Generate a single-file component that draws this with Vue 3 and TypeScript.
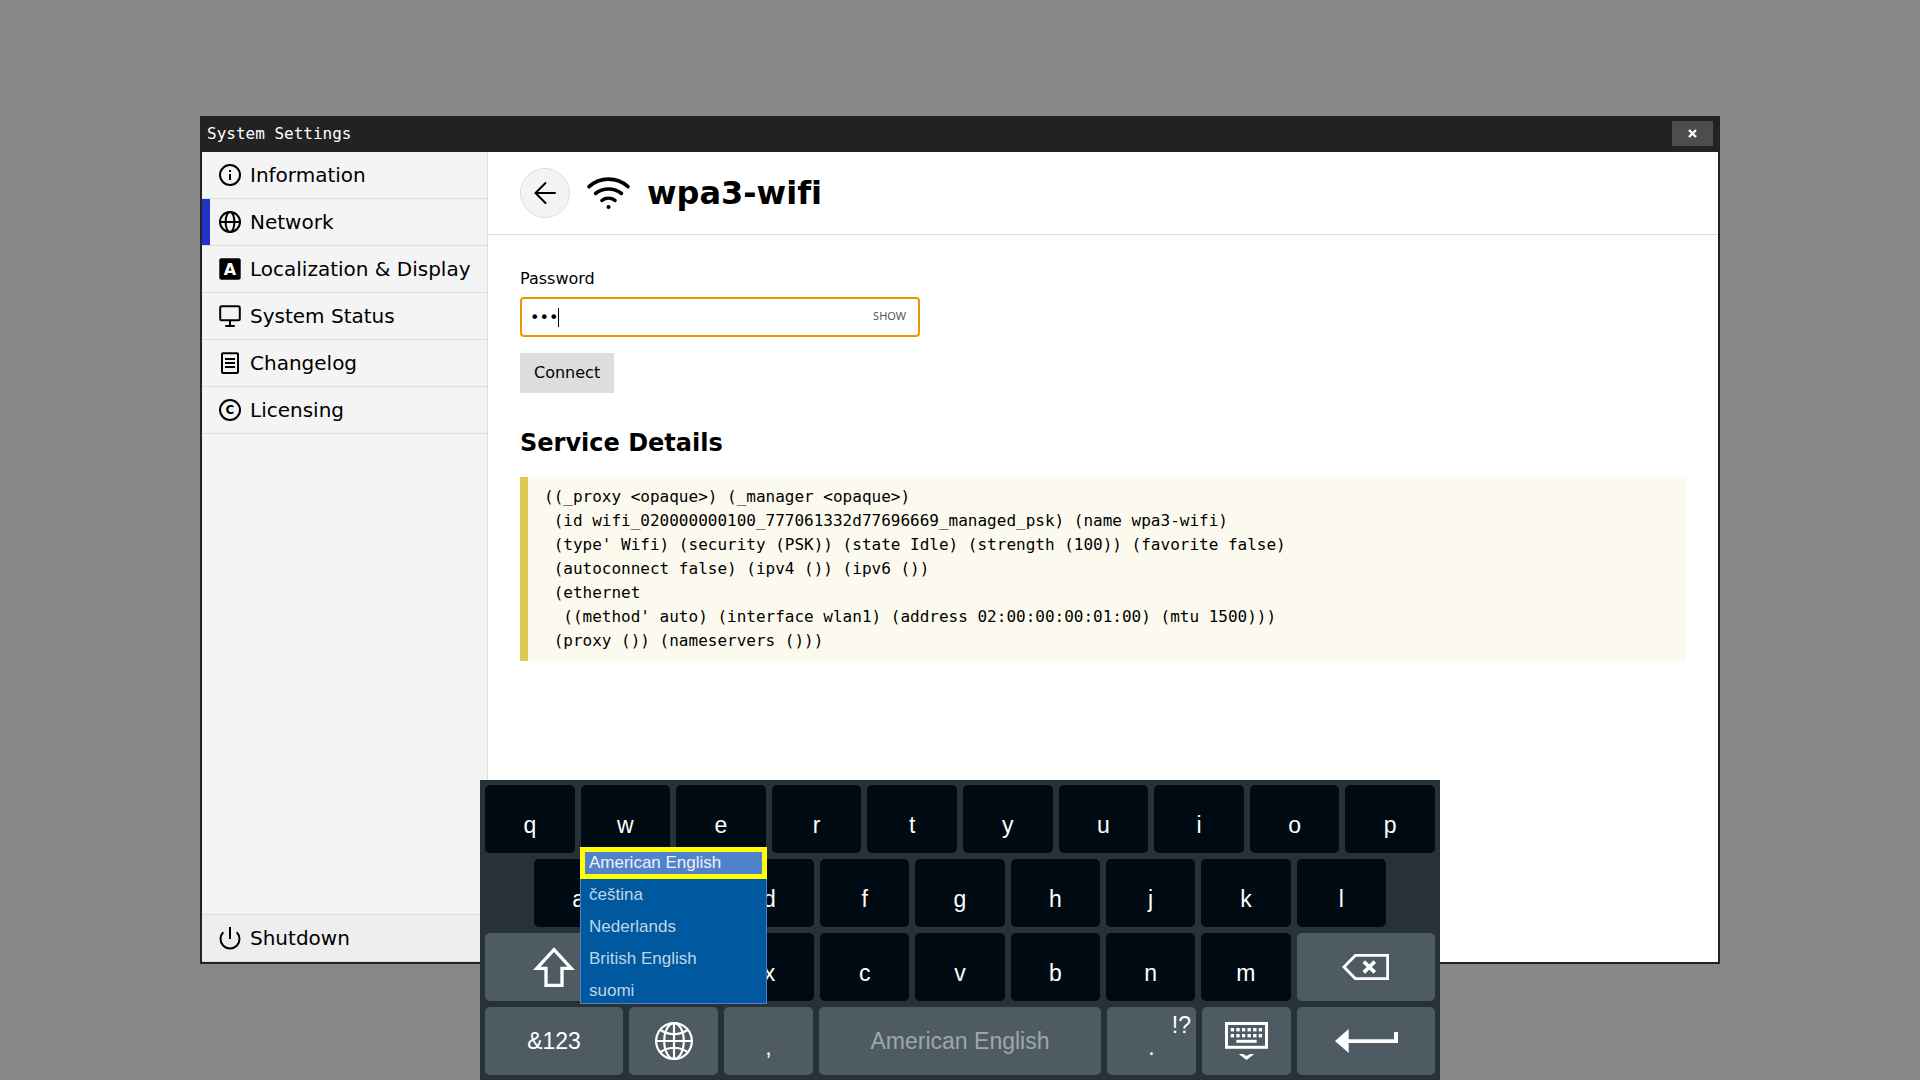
<script setup lang="ts">
import { ref } from 'vue'

interface NavItem {
  id: string
  label: string
}

interface Key {
  label: string
  kind: 'letter' | 'side' | 'small' | 'space'
  icon?: string
  low?: boolean
  hint?: string
}

const navItems: NavItem[] = [
  { id: 'information', label: 'Information' },
  { id: 'network', label: 'Network' },
  { id: 'localization', label: 'Localization & Display' },
  { id: 'status', label: 'System Status' },
  { id: 'changelog', label: 'Changelog' },
  { id: 'licensing', label: 'Licensing' },
]
const current = ref('network')

const password = ref('abc')
const revealed = ref(false)

const details = `((_proxy <opaque>) (_manager <opaque>)
 (id wifi_020000000100_777061332d77696669_managed_psk) (name wpa3-wifi)
 (type' Wifi) (security (PSK)) (state Idle) (strength (100)) (favorite false)
 (autoconnect false) (ipv4 ()) (ipv6 ())
 (ethernet
  ((method' auto) (interface wlan1) (address 02:00:00:00:01:00) (mtu 1500)))
 (proxy ()) (nameservers ()))`

const letters = (row: string): Key[] => row.split('').map((label) => ({ label, kind: 'letter', low: true }))

const rows: Key[][] = [
  letters('qwertyuiop'),
  letters('asdfghjkl'),
  [
    { label: 'Shift', kind: 'side', icon: 'shift' },
    ...letters('zxcvbnm'),
    { label: 'Backspace', kind: 'side', icon: 'backspace' },
  ],
  [
    { label: '&123', kind: 'side' },
    { label: 'Language', kind: 'small', icon: 'language' },
    { label: ',', kind: 'small', low: true },
    { label: 'American English', kind: 'space' },
    { label: '.', kind: 'small', low: true, hint: '!?' },
    { label: 'Hide keyboard', kind: 'small', icon: 'hide' },
    { label: 'Enter', kind: 'side', icon: 'enter' },
  ],
]

const languages = ['American English', 'čeština', 'Nederlands', 'British English', 'suomi']
const language = ref(languages[0])
</script>

<template>
  <div class="desktop">
    <div class="window">
      <header class="titlebar">
        <span>System Settings</span>
        <button class="close" type="button" aria-label="Close">
          <svg width="9" height="9" viewBox="0 0 9 9"><path d="M1 1l7 7M8 1l-7 7" stroke="#fff" stroke-width="2.3" /></svg>
        </button>
      </header>

      <div class="body">
        <nav class="sidebar">
          <a
            v-for="item in navItems"
            :key="item.id"
            href="#"
            class="nav-item"
            :class="{ active: item.id === current }"
            @click.prevent="current = item.id"
          >
            <svg class="nav-icon" viewBox="0 0 24 24">
              <template v-if="item.id === 'information'">
                <circle cx="12" cy="12" r="10" />
                <path d="M12 7v2M12 11v6" />
              </template>
              <template v-else-if="item.id === 'network'">
                <circle cx="12" cy="12" r="10" />
                <ellipse cx="12" cy="12" rx="4.4" ry="10" />
                <path d="M2 12h20" />
              </template>
              <template v-else-if="item.id === 'localization'">
                <rect class="solid" x="1.3" y="1.3" width="21.4" height="21.4" rx="2" />
                <text class="mark light" x="12" y="18" font-size="16">A</text>
              </template>
              <template v-else-if="item.id === 'status'">
                <rect x="2.2" y="2.2" width="19.6" height="14" rx="1.5" />
                <path d="M12 16v6M7.3 22h9.4" />
              </template>
              <template v-else-if="item.id === 'changelog'">
                <rect x="4" y="2.2" width="16" height="19.8" rx="1" />
                <path d="M7 8h10M7 12h10M7 16h10" />
              </template>
              <template v-else>
                <circle cx="12" cy="12" r="10" />
                <text class="mark" x="12" y="16.4" font-size="12">C</text>
              </template>
            </svg>
            <span>{{ item.label }}</span>
          </a>
          <button class="nav-item shutdown" type="button">
            <svg class="nav-icon" viewBox="0 0 24 24"><path d="M5.3 6.3a9.5 9.5 0 1 0 13.4 0M12 1v12" /></svg>
            <span>Shutdown</span>
          </button>
        </nav>

        <main class="content">
          <div class="page-header">
            <a class="back" href="#" aria-label="Back" @click.prevent>
              <svg width="24" height="24" viewBox="0 0 24 24"><path d="M22 12H2.5M12.5 2L2.5 12l10 10" fill="none" stroke="#000" stroke-width="2" stroke-linecap="round" /></svg>
            </a>
            <svg width="45" height="32" viewBox="0 0 45 32" fill="none" stroke="#000" stroke-width="3.6" stroke-linecap="round">
              <path d="M3 9.7A29 29 0 0 1 42 9.7M9.5 16.5A21 21 0 0 1 35.5 16.5M16 23.4A11 11 0 0 1 29 23.4" />
              <circle cx="22.5" cy="30" r="2" fill="#000" stroke="none" />
            </svg>
            <h1>wpa3-wifi</h1>
          </div>

          <div class="page">
            <form class="form" @submit.prevent>
              <label for="password">Password</label>
              <div class="field">
                <input id="password" v-model="password" :type="revealed ? 'text' : 'password'" autocomplete="off" />
                <span class="caret"></span>
                <button class="show" type="button" @click="revealed = !revealed">SHOW</button>
              </div>
              <button class="connect" type="submit">Connect</button>
            </form>
            <h2>Service Details</h2>
            <pre class="details">{{ details }}</pre>
          </div>
        </main>
      </div>
    </div>

    <div class="keyboard">
      <div v-for="(row, index) in rows" :key="index" class="key-row" :class="{ inset: index === 1 }">
        <button
          v-for="key in row"
          :key="key.label"
          type="button"
          class="key"
          :class="[key.kind, { low: key.low }]"
          :aria-label="key.icon ? key.label : undefined"
        >
          <svg v-if="key.icon === 'shift'" width="42" height="40" viewBox="0 0 42 40" fill="none" stroke="#fff" stroke-width="3.3">
            <path d="M21 2.6L38.2 21.4H29V38.3H13V21.4H3.8Z" />
          </svg>
          <svg v-else-if="key.icon === 'backspace'" width="47" height="26" viewBox="0 0 47 26" fill="none" stroke="#fff" stroke-width="2.8">
            <path d="M2 13L13.3 1.4H45.6V24.6H13.3Z" />
            <path d="M21.8 7.6l11 10.8M32.8 7.6l-11 10.8" stroke-width="3.6" />
          </svg>
          <svg v-else-if="key.icon === 'language'" width="38" height="38" viewBox="0 0 38 38" fill="none" stroke="#fff" stroke-width="2.2">
            <circle cx="19" cy="19" r="17.9" />
            <ellipse cx="19" cy="19" rx="9.8" ry="17.9" />
            <path d="M19 1v36M1 19h36M5.5 8Q19 16.5 32.5 8M5.5 30Q19 21.5 32.5 30" />
          </svg>
          <svg v-else-if="key.icon === 'hide'" width="43" height="38" viewBox="0 0 43 38" fill="#fff">
            <rect x="1.5" y="1.5" width="40" height="23.8" fill="none" stroke="#fff" stroke-width="3" />
            <template v-for="n in 6" :key="n">
              <rect :x="0.1 + n * 5.6" y="6" width="3.4" height="3.4" />
              <rect :x="0.1 + n * 5.6" y="12" width="3.4" height="3.4" />
            </template>
            <rect x="11.3" y="17.8" width="20.4" height="3" />
            <path d="M13.7 32H18L21.5 34L25 32H29.3L21.5 38Z" />
          </svg>
          <svg v-else-if="key.icon === 'enter'" width="63" height="24" viewBox="0 0 63 24" fill="#fff">
            <path d="M0 12L13.7 0V10.2H59V3H63V13.9H13.7V24Z" />
          </svg>
          <template v-else>{{ key.label }}</template>
          <span v-if="key.hint" class="hint">{{ key.hint }}</span>
        </button>
      </div>

      <div class="languages" role="listbox" aria-label="Language">
        <button
          v-for="name in languages"
          :key="name"
          type="button"
          role="option"
          class="language"
          :class="{ selected: name === language }"
          :aria-selected="name === language"
          @click="language = name"
        >
          {{ name }}
        </button>
      </div>
    </div>
  </div>
</template>

<style>
body {
  margin: 0;
  background: #888;
}
</style>

<style scoped>
* {
  box-sizing: border-box;
}

button {
  border: 0;
  margin: 0;
  padding: 0;
  color: inherit;
  font: inherit;
  cursor: pointer;
}

.desktop {
  display: flex;
  min-height: 100vh;
  padding: 116px 200px;
  font: 16px/24px 'DejaVu Sans', sans-serif;
  font-variant-ligatures: none;
  color: #000;
}

.window {
  display: flex;
  flex: 1;
  flex-direction: column;
  min-width: 0;
  border: solid #222;
  border-width: 0 2px 2px;
  background: #fff;
}

.titlebar {
  display: flex;
  align-items: flex-start;
  justify-content: space-between;
  padding: 0 5px;
  background: #222;
  color: #fff;
  font-family: 'DejaVu Sans Mono', monospace;
  line-height: 36px;
}

.close {
  display: flex;
  align-items: center;
  justify-content: center;
  width: 41px;
  height: 25px;
  margin-top: 5px;
  background: #4d4d4d;
}

.body {
  display: flex;
  flex: 1;
}

.sidebar {
  display: flex;
  flex: none;
  flex-direction: column;
  width: 286px;
  border-right: 1px solid #ddd;
  background: #f4f4f4;
}

.nav-item {
  display: flex;
  align-items: center;
  gap: 8px;
  height: 47px;
  padding: 0 16px;
  border-bottom: 1px solid #ddd;
  color: #000;
  font-size: 20px;
  text-decoration: none;
  white-space: nowrap;
}

.nav-item.active {
  box-shadow: inset 8px 0 #23c;
}

.shutdown {
  height: 48px;
  margin-top: auto;
  border-top: 1px solid #ddd;
  background: #eee;
}

.nav-icon {
  flex: none;
  width: 24px;
  height: 24px;
  fill: none;
  stroke: #000;
  stroke-width: 2;
}

.solid {
  fill: #000;
  stroke: none;
}

.mark {
  fill: #000;
  stroke: none;
  font-family: 'DejaVu Sans', sans-serif;
  font-weight: 700;
  text-anchor: middle;
}

.mark.light {
  fill: #fff;
}

.content {
  flex: 1;
  min-width: 0;
}

.page-header {
  display: flex;
  align-items: center;
  gap: 16px;
  padding: 16px 32px;
  border-bottom: 1px solid #ddd;
}

.back {
  display: flex;
  align-items: center;
  justify-content: center;
  width: 50px;
  height: 50px;
  border: 1px solid #ddd;
  border-radius: 50%;
  background: #f4f4f4;
}

h1,
h2 {
  margin: 0;
  font-weight: 700;
}

h1 {
  font-size: 32px;
  line-height: 48px;
}

h2 {
  margin: 32px 0 16px;
  font-size: 24px;
  line-height: 36px;
}

.page {
  padding: 32px;
}

.form {
  display: flex;
  flex-direction: column;
  align-items: flex-start;
}

.field {
  position: relative;
  width: 400px;
  max-width: 100%;
  margin: 6px 0 16px;
}

.field input {
  display: block;
  width: 100%;
  height: 40px;
  padding: 0 64px 0 8px;
  border: 2px solid #e69900;
  border-radius: 4px;
  outline: none;
  background: #fff;
  color: #000;
  caret-color: transparent;
  font: inherit;
}

.caret {
  position: absolute;
  top: 11px;
  left: 38px;
  width: 1px;
  height: 19px;
  background: #000;
}

.show {
  position: absolute;
  top: 8px;
  right: 14px;
  background: none;
  color: #555;
  font-family: 'Noto Sans', sans-serif;
  font-size: 11px;
  line-height: 22px;
}

.connect {
  height: 40px;
  padding: 0 14px;
  background: #ddd;
}

.details {
  margin: 0;
  padding: 8px 16px;
  border-left: 8px solid #dfca50;
  background: #fcfaee;
  font-family: 'DejaVu Sans Mono', monospace;
  font-size: 16px;
  line-height: 24px;
}

.keyboard {
  position: fixed;
  bottom: 0;
  left: 25%;
  display: flex;
  flex-direction: column;
  gap: 6px;
  width: 50%;
  padding: 5px;
  background: #263238;
  color: #fff;
  font: 23px/26px 'Liberation Sans', Arial, sans-serif;
}

.key-row {
  display: flex;
  gap: 6px;
}

.key-row.inset {
  padding: 0 49px;
}

.key {
  position: relative;
  display: flex;
  flex: 89 1 0;
  align-items: center;
  justify-content: center;
  min-width: 0;
  height: 68px;
  border-radius: 5px;
  background: #4e5b62;
  white-space: nowrap;
}

.key.letter {
  background: #000a12;
}

.key.side {
  flex-grow: 138;
}

.key.space {
  flex-grow: 282;
  color: #a0a6a9;
}

.key.low {
  padding-top: 12px;
}

.hint {
  position: absolute;
  top: 5px;
  right: 5px;
}

.languages {
  position: absolute;
  top: 67px;
  left: 100px;
  display: flex;
  flex-direction: column;
  width: 187px;
  height: 157px;
  overflow: hidden;
  background: #00589f;
  box-shadow: inset 0 0 0 1px #4a80cc;
  font-size: 17px;
}

.language {
  flex: none;
  height: 32px;
  padding: 0 9px;
  background: none;
  color: #bfd5e7;
  text-align: left;
}

.language.selected {
  padding: 0 4px;
  border: 5px solid #ff0;
  background: #5083ce;
  color: #f0f0f0;
  line-height: 22px;
}
</style>
